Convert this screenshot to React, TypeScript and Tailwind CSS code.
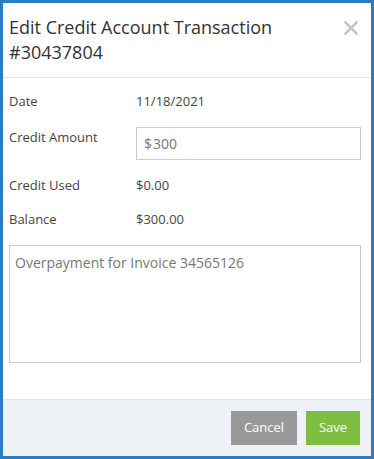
export default function App() {
  return (
    <div
      className="flex h-[459px] w-[374px] flex-col border-[3px] border-[#2f7bc0] bg-white text-[#333]"
      style={{ fontFamily: '"Open Sans", "Noto Sans", sans-serif' }}
    >
      <div className="flex items-start justify-between border-b border-[#e2e5e8] pb-[12px] pl-[6px] pr-[13px] pt-[12px]">
        <h1 className="text-[18px] font-normal leading-[25px] text-[#333]">
          Edit Credit Account Transaction
          <br />
          #30437804
        </h1>
        <svg width="14" height="14" viewBox="0 0 14 14" className="mt-[6px]">
          <path d="M1.5 1.5 L12.5 12.5 M12.5 1.5 L1.5 12.5" stroke="#c6c6c6" strokeWidth="2.6" strokeLinecap="square" />
        </svg>
      </div>

      <div className="flex flex-1 flex-col px-[6px] pt-[13px] text-[13px] text-[#444]">
        <div className="flex h-[22px] items-center">
          <span className="w-[127px]">Date</span>
          <span>11/18/2021</span>
        </div>
        <div className="mt-[14px] flex">
          <span className="w-[127px] pt-[1px]">Credit Amount</span>
          <div className="flex h-[33px] w-[225px] items-center border border-[#ccc] px-[7px] text-[14px] text-[#777]">
            $<span className="ml-[1px]">300</span>
          </div>
        </div>
        <div className="mt-[15px] flex h-[22px] items-center">
          <span className="w-[127px]">Credit Used</span>
          <span>$0.00</span>
        </div>
        <div className="mt-[12px] flex h-[22px] items-center">
          <span className="w-[127px]">Balance</span>
          <span>$300.00</span>
        </div>
        <div className="mt-[14px] h-[118px] w-[352px] border border-[#ccc] px-[5px] py-[6px] text-[14px] text-[#777]">
          Overpayment for Invoice 34565126
        </div>
      </div>

      <div className="flex h-[57px] items-center justify-end gap-[9px] border-t border-[#e2e5e8] bg-[#eef1f6] pr-[11px]">
        <button className="h-[34px] w-[66px] bg-[#999] text-[13px] text-white">Cancel</button>
        <button className="h-[34px] w-[54px] bg-[#7cbd42] text-[13px] text-white">Save</button>
      </div>
    </div>
  );
}
